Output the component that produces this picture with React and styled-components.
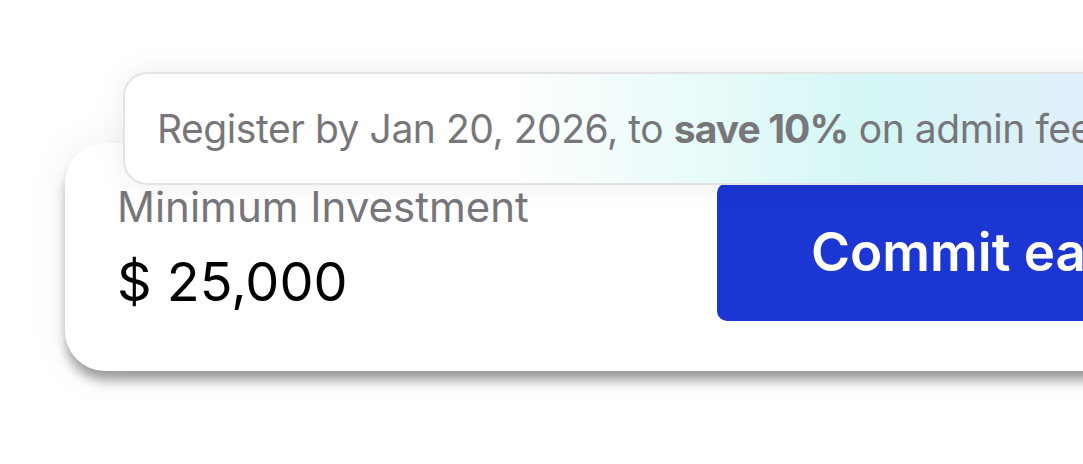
import React from "react";
import styled, { createGlobalStyle } from "styled-components";

const Global = createGlobalStyle`
  html, body { margin: 0; padding: 0; background: #ffffff; overflow: hidden; }
  body { font-family: Inter, "Noto Sans", sans-serif; width: 1083px; height: 464px; }
`;

const Page = styled.div`
  width: 1083px;
  height: 464px;
  overflow: hidden;
  padding: 72px 0 0 65px;
  box-sizing: border-box;
`;

const Stack = styled.div`
  display: flex;
  flex-direction: column;
  width: 1300px;
`;

const Banner = styled.div`
  position: relative;
  z-index: 2;
  margin-left: 58px;
  height: 113px;
  box-sizing: border-box;
  border: 2px solid #e3e3e3;
  border-right: none;
  border-radius: 24px 0 0 24px;
  background: linear-gradient(90deg, #ffffff 0px, #ffffff 380px, #d4f6f5 745px, #e2eefa 1000px);
  box-shadow: 0 0 30px rgba(0, 0, 0, 0.08);
  display: flex;
  align-items: center;
  padding-left: 32px;
  font-size: 39px;
  letter-spacing: -0.45px;
  color: #77777a;
  white-space: nowrap;
`;

const Strong = styled.b`
  font-weight: 700;
  letter-spacing: -0.9px;
`;

const Card = styled.div`
  position: relative;
  z-index: 1;
  margin-top: -42px;
  height: 228px;
  box-sizing: border-box;
  background: #ffffff;
  border-radius: 40px 0 0 40px;
  box-shadow: 0 11px 12px -2px rgba(0, 0, 0, 0.38), 0 0 40px rgba(0, 0, 0, 0.07);
  display: flex;
  align-items: flex-start;
  padding: 40px 0 0 52px;
`;

const Info = styled.div`
  display: flex;
  flex-direction: column;
  width: 600px;
`;

const Label = styled.div`
  font-size: 42px;
  line-height: 48px;
  color: #76767b;
`;

const Value = styled.div`
  font-size: 54px;
  line-height: 64px;
  color: #000000;
  margin-top: 19px;
`;

const CommitButton = styled.button`
  height: 138px;
  width: 600px;
  border: none;
  border-radius: 10px;
  background: #1b36d2;
  color: #ffffff;
  font-family: inherit;
  font-size: 53px;
  font-weight: 600;
  text-align: left;
  padding: 0 0 0 94px;
  white-space: nowrap;
`;

export default function App() {
  return (
    <Page>
      <Global />
      <Stack>
        <Banner>
          Register by Jan 20, 2026, to&nbsp;<Strong>save 10%</Strong>&nbsp;on admin fees
        </Banner>
        <Card>
          <Info>
            <Label>Minimum Investment</Label>
            <Value>$ 25,000</Value>
          </Info>
          <CommitButton>Commit early</CommitButton>
        </Card>
      </Stack>
    </Page>
  );
}
